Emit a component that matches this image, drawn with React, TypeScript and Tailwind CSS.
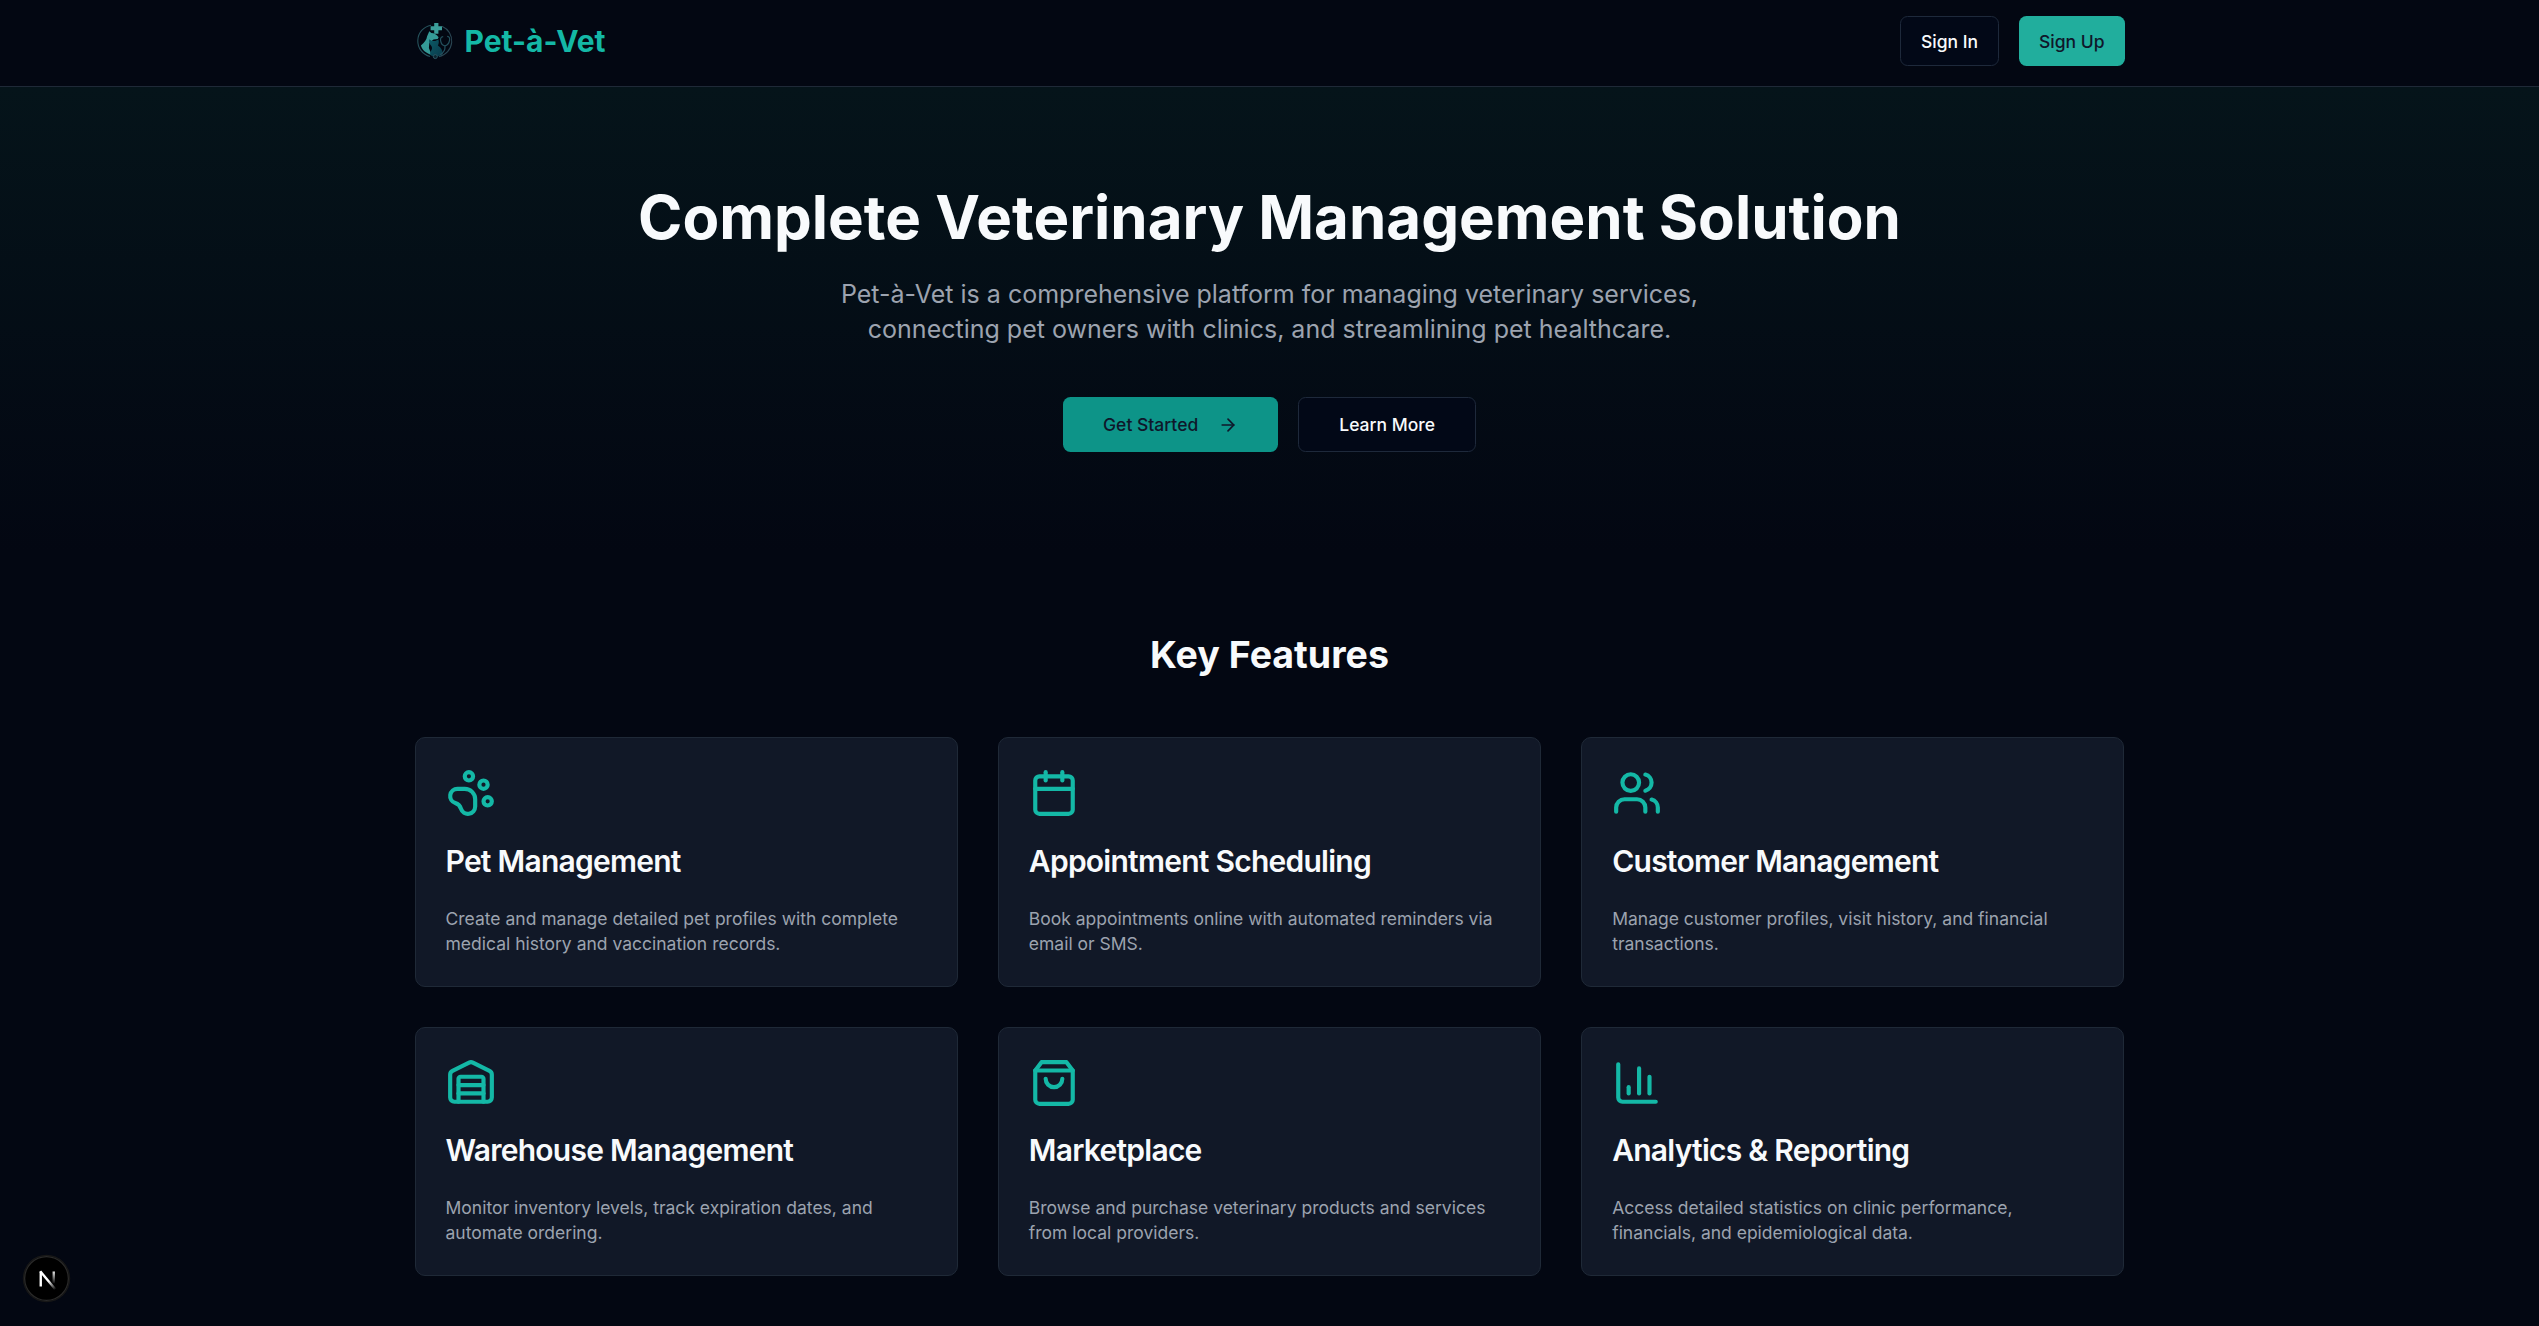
import { ArrowRight, Calendar, ChartColumn, PawPrint, Users, Warehouse } from "lucide-react";
import type { ComponentType, ReactNode } from "react";

type Feature = {
  icon: ComponentType<{ className?: string }>;
  title: string;
  text: string;
};

/* Shopping bag with a square top band and a handle. */
function BagIcon({ className }: { className?: string }) {
  return (
    <svg
      viewBox="0 0 24 24"
      fill="none"
      stroke="currentColor"
      strokeWidth="2"
      strokeLinecap="round"
      strokeLinejoin="round"
      className={className}
    >
      <path d="M6 2 3 6v14a2 2 0 0 0 2 2h14a2 2 0 0 0 2-2V6l-3-4Z" />
      <path d="M3 6h18" />
      <path d="M16 10a4 4 0 0 1-8 0" />
    </svg>
  );
}

const features: Feature[] = [
  {
    icon: PawPrint,
    title: "Pet Management",
    text: "Create and manage detailed pet profiles with complete medical history and vaccination records.",
  },
  {
    icon: Calendar,
    title: "Appointment Scheduling",
    text: "Book appointments online with automated reminders via email or SMS.",
  },
  {
    icon: Users,
    title: "Customer Management",
    text: "Manage customer profiles, visit history, and financial transactions.",
  },
  {
    icon: Warehouse,
    title: "Warehouse Management",
    text: "Monitor inventory levels, track expiration dates, and automate ordering.",
  },
  {
    icon: BagIcon,
    title: "Marketplace",
    text: "Browse and purchase veterinary products and services from local providers.",
  },
  {
    icon: ChartColumn,
    title: "Analytics & Reporting",
    text: "Access detailed statistics on clinic performance, financials, and epidemiological data.",
  },
];

/* Dog and cat silhouettes in a ring, with a medical cross and a stethoscope. */
function Logo() {
  return (
    <svg viewBox="0 0 40 40" className="size-8" fill="none">
      <defs>
        <linearGradient id="cat" x1="0" y1="0" x2="1" y2="1">
          <stop offset="0" stopColor="#0b5a66" />
          <stop offset="1" stopColor="#0a3a4b" />
        </linearGradient>
      </defs>
      <path d="M16 4.200A16 16 0 0 0 15 35.500" stroke="#26525c" strokeWidth="1.100" />
      <path d="M27 5.200A16 16 0 0 1 24 35.600" stroke="#2a4653" strokeWidth="1.100" />
      <path
        d="M14.300 10.200l2 1.800c3 .2 5.600 1.600 7.300 4.200l-.9 1.800-4.200.4-4.200 3.600-.4 5 2.600 6.800c-5.600-1.400-9.500-5-10.600-9.300 3.600-3.200 5.800-6 6.200-9.300z"
        fill="#359a97"
      />
      <path
        d="M14.200 18.300l3 1.700 3 .1 3.200-1.500c.7 2.200.5 4.200-.5 5.900 3.300 2.100 4.900 5 4.600 8.400-2.800 2.600-7.300 3.600-10.900 1.800-2.200-1.200-1.600-3.200-.2-5.400 1-1.700.9-3.300-.6-5.100-1.500-1.600-2.100-3.600-1.600-5.900z"
        fill="url(#cat)"
      />
      <path d="M19.200 2h4.200v3.300h3.600v4h-3.600v3.400h-4.200V9.300h-3.600v-4h3.600z" fill="#3c9f9b" />
      <path
        d="M28.200 15.600c-2.400.2-2.900 2-2.600 4 .4 2.800 2 4.800 4.200 5.300 2.600-.6 4.300-2.900 4.800-5.800.3-2.200-.3-3.500-2.400-3.700M30 25c.3 4-1.600 7-5 8.800"
        stroke="#24505d"
        strokeWidth="1.200"
      />
      <circle cx="20.300" cy="35.600" r="2" fill="#0a2531" stroke="#2c5662" strokeWidth="1" />
    </svg>
  );
}

function Button({ className, children }: { className: string; children: ReactNode }) {
  return (
    <button
      className={`inline-flex items-center justify-center gap-2 rounded-md text-sm font-medium whitespace-nowrap ${className}`}
    >
      {children}
    </button>
  );
}

function FeatureCard({ icon: Icon, title, text }: Feature) {
  return (
    <div className="rounded-lg border border-[#1f2937] bg-[#111827]">
      <div className="flex flex-col gap-1.5 p-6">
        <Icon className="mb-4 size-10 text-[#14b8a6]" />
        <h3 className="text-2xl leading-none font-semibold tracking-tight">{title}</h3>
      </div>
      <div className="p-6 pt-0">
        <p className="text-sm text-[#9ca3af]">{text}</p>
      </div>
    </div>
  );
}

function DevBadge() {
  return (
    <div className="absolute bottom-5 left-[19.2px] flex size-9 items-center justify-center rounded-full bg-black shadow-[0_0_0_1px_#171717,inset_0_0_0_1px_#2a2a2a]">
      <svg viewBox="0 0 40 40" className="size-10 shrink-0" fill="none">
        <defs>
          <linearGradient id="stem" x1="0" y1="13" x2="0" y2="24" gradientUnits="userSpaceOnUse">
            <stop stopColor="#fff" />
            <stop offset="1" stopColor="#fff" stopOpacity="0" />
          </linearGradient>
          <linearGradient id="diag" x1="22" y1="21" x2="27.500" y2="28" gradientUnits="userSpaceOnUse">
            <stop stopColor="#fff" />
            <stop offset="1" stopColor="#fff" stopOpacity="0" />
          </linearGradient>
        </defs>
        <path d="M15 26V14" stroke="#fff" strokeWidth="1.900" />
        <path d="M14.600 13.800L26.600 28.200" stroke="url(#diag)" strokeWidth="1.900" />
        <path d="M25.400 14v9.500" stroke="url(#stem)" strokeWidth="1.900" />
      </svg>
    </div>
  );
}

export default function App() {
  return (
    <div className="relative h-[1060.8px] overflow-hidden bg-[#030712] font-[Inter,sans-serif] text-[#f8fafc] [zoom:1.25]">
      <header className="border-b border-[#1f2937]">
        <div className="mx-auto flex max-w-[1400px] items-center justify-between px-4 pt-[12.8px] pb-4">
          <div className="flex items-center gap-2">
            <Logo />
            <span className="pt-[1.6px] text-2xl font-bold text-[#14b8a6]">Pet-à-Vet</span>
          </div>
          <div className="flex gap-4">
            <Button className="h-10 border border-[#1e293b] bg-[#020817] px-4">Sign In</Button>
            <Button className="h-10 bg-[#21ae9d] px-4 text-[#0f172a]">Sign Up</Button>
          </div>
        </div>
      </header>

      <section className="bg-linear-to-b from-[#05141a] to-[#030712] py-20">
        <div className="mx-auto max-w-[1400px] px-4 text-center">
          <h1 className="mb-6 text-5xl font-bold">Complete Veterinary Management Solution</h1>
          <p className="mx-auto mb-10 max-w-3xl text-xl text-[#9ca3af]">
            Pet-à-Vet is a comprehensive platform for managing veterinary services,
            <br />
            connecting pet owners with clinics, and streamlining pet healthcare.
          </p>
          <div className="flex justify-center gap-4">
            <Button className="h-11 bg-[#0d9488] px-8 text-[#0f172a]">
              Get Started
              <ArrowRight className="ml-2 size-4" />
            </Button>
            <Button className="h-11 border border-[#1e293b] bg-[#020817] px-8">Learn More</Button>
          </div>
        </div>
      </section>

      <section className="py-16">
        <div className="mx-auto max-w-[1400px] px-4">
          <h2 className="mb-12 text-center text-3xl font-bold">Key Features</h2>
          <div className="grid grid-cols-3 gap-8">
            {features.map((feature) => (
              <FeatureCard key={feature.title} {...feature} />
            ))}
          </div>
        </div>
      </section>

      <DevBadge />
    </div>
  );
}
